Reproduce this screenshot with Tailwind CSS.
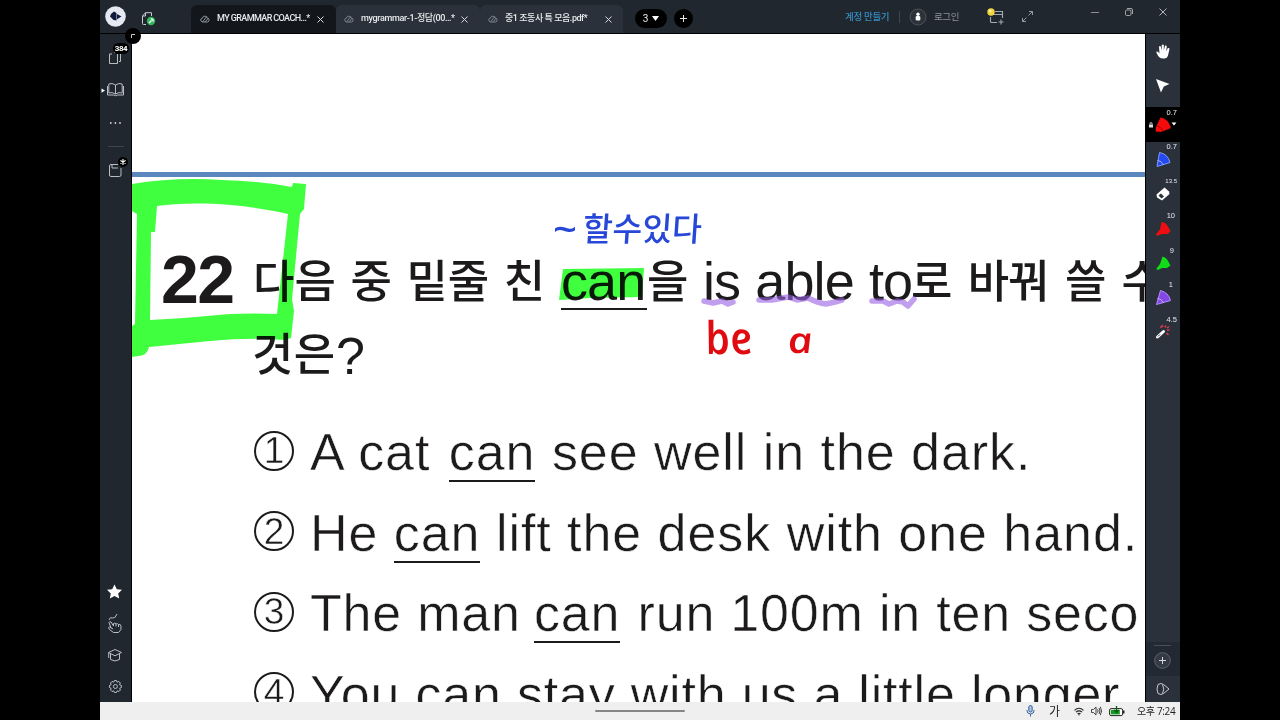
<!DOCTYPE html>
<html lang="ko">
<head>
<meta charset="utf-8">
<title>MY GRAMMAR COACH</title>
<script src="https://cdn.jsdelivr.net/npm/@tailwindcss/browser@4"></script>
</head>
<body class="bg-black w-[1280px] h-[720px] overflow-hidden font-['Liberation_Sans','Noto_Sans_CJK_KR',sans-serif]">
<div class="mx-[100px] h-[720px] flex flex-col bg-[#20272f]">

  <!-- title bar -->
  <header class="h-[34px] shrink-0 flex items-stretch bg-[#20272f] border-b border-black text-[#e8eaec] font-['Roboto','Noto_Sans_CJK_KR',sans-serif]">
    <div class="w-[91px] flex items-center pl-[5px] gap-[15px]">
      <svg class="w-[21px] h-[21px]" viewBox="0 0 21 21"><circle cx="10.5" cy="10.5" r="10.3" fill="#e6e8f2"/><path d="M9 5.500L11.500 7V14.500L8.500 14L5 10.500L6 8Z" fill="#101a3c"/><path d="M12 8L16.500 10.500L12 13.300Z" fill="#101a3c"/></svg>
      <svg class="w-[15px] h-[15px] mt-1" viewBox="0 0 15 15" fill="none"><path d="M5 13.500H2.500Q1.500 13.500 1.500 12.500V5L4.500 1.700H10.500V5" stroke="#c5cad0" stroke-width="1"/><path d="M1.500 5H4.500V1.700" stroke="#c5cad0" stroke-width="1"/><circle cx="10" cy="10" r="4.200" fill="#33b85a"/><path d="M8 12L10.500 9.500M10 8Q12.500 8 12 10.500" stroke="#fff" stroke-width="1.400"/></svg>
    </div>
    <div class="w-[145px] mt-[5px] rounded-t-md bg-[#13171b] flex items-center pl-[9px]">
      <svg class="w-[10px] h-[8px]" viewBox="0 0 10 8" fill="none" stroke="#8c9199"><path d="M2.500 7H7.500Q9.500 6.500 9 4.500Q8.500 2.500 7 3Q6 .5 3.800 1.200Q2.500 1.800 2.700 3Q.6 3.500 .7 5Q.8 6.500 2.500 7L7 1.200M5 7L8.500 3"/></svg>
      <span class="ml-[7px] w-[94px] text-[9px] tracking-[-0.6px] font-medium whitespace-nowrap">MY GRAMMAR COACH…*</span>
      <svg class="ml-[6px] w-[7px] h-[7px]" viewBox="0 0 7 7" stroke="#d9dce0"><path d="M.5 .5L6.500 6.500M6.500 .5L.5 6.500"/></svg>
    </div>
    <div class="w-[144px] mt-[5px] rounded-t-md bg-[#2a313b] flex items-center pl-[8px]">
      <svg class="w-[10px] h-[8px]" viewBox="0 0 10 8" fill="none" stroke="#7c828b"><path d="M2.500 7H7.500Q9.500 6.500 9 4.500Q8.500 2.500 7 3Q6 .5 3.800 1.200Q2.500 1.800 2.700 3Q.6 3.500 .7 5Q.8 6.500 2.500 7L7 1.200M5 7L8.500 3"/></svg>
      <span class="ml-[7px] w-[94px] text-[9px] tracking-[-0.35px] font-medium whitespace-nowrap">mygrammar-1-정답(00…*</span>
      <svg class="ml-[6px] w-[7px] h-[7px]" viewBox="0 0 7 7" stroke="#d9dce0"><path d="M.5 .5L6.500 6.500M6.500 .5L.5 6.500"/></svg>
    </div>
    <div class="w-[143px] mt-[5px] rounded-t-md bg-[#2a313b] flex items-center pl-[8px]">
      <svg class="w-[10px] h-[8px]" viewBox="0 0 10 8" fill="none" stroke="#7c828b"><path d="M2.500 7H7.500Q9.500 6.500 9 4.500Q8.500 2.500 7 3Q6 .5 3.800 1.200Q2.500 1.800 2.700 3Q.6 3.500 .7 5Q.8 6.500 2.500 7L7 1.200M5 7L8.500 3"/></svg>
      <span class="ml-[7px] w-[94px] text-[9px] tracking-[-0.45px] font-medium whitespace-nowrap">중1 조동사 특 모음.pdf*</span>
      <svg class="ml-[6px] w-[7px] h-[7px]" viewBox="0 0 7 7" stroke="#d9dce0"><path d="M.5 .5L6.500 6.500M6.500 .5L.5 6.500"/></svg>
    </div>
    <div class="ml-[12px] flex items-center gap-[7px] pt-[3px]">
      <div class="w-8 h-[19px] rounded-full bg-black flex items-center justify-center gap-1 text-[10px]"><span>3</span><svg class="w-[7px] h-[5px]" viewBox="0 0 7 5"><path d="M0 0H7L3.500 5Z" fill="#fff"/></svg></div>
      <div class="w-[19px] h-[19px] rounded-full bg-black flex items-center justify-center"><svg class="w-[7px] h-[7px]" viewBox="0 0 7 7" stroke="#e5e7ea"><path d="M3.500 0V7M0 3.500H7"/></svg></div>
    </div>
    <div class="ml-[152px] flex items-center whitespace-nowrap text-[9.5px]">
      <span class="w-[46px] pt-[2px] text-[#3590c4] tracking-[-0.3px] font-medium">계정 만들기</span>
      <span class="ml-[8px] w-px h-3 bg-[#3e454e]"></span>
      <svg class="ml-[9px] w-[18px] h-[18px]" viewBox="0 0 18 18"><circle cx="9" cy="9" r="8" fill="#2b323a" stroke="#4a5159"/><circle cx="9" cy="6.200" r="1.700" fill="#fff"/><rect x="6.700" y="8" width="4.600" height="4.600" rx="1.300" fill="#fff"/></svg>
      <span class="ml-[7px] w-[26px] pt-[2px] tracking-[-0.4px] text-[#8d9299]">로그인</span>
      <svg class="ml-[27px] w-[18px] h-[17px]" viewBox="0 0 18 17" fill="none" stroke="#a4a9b0" stroke-width="1.100"><path d="M8 3.500H15.500V10M3.500 9V13.500Q3.500 14.500 4.500 14.500H10M4 6.500H15.500M14 11.500V16.500M11.500 14H16.500"/><circle cx="4" cy="4" r="3.700" fill="#f4d43c" stroke="none"/><circle cx="3.200" cy="3" r="1.300" fill="#fff6b0" stroke="none"/></svg>
      <svg class="ml-[17px] w-[11px] h-[11px]" viewBox="0 0 11 11" fill="none" stroke="#959aa1"><path d="M7 .5H10.500V4M10.500 .5L6.500 4.500M4 10.500H.5V7M.5 10.500L4.500 6.500"/></svg>
    </div>
    <div class="ml-auto mr-[13px] h-6 flex items-center gap-[26px]">
      <svg class="w-2 h-2" viewBox="0 0 8 8" stroke="#8b9097"><path d="M0 4.500H8"/></svg>
      <svg class="w-2 h-2" viewBox="0 0 8 8" fill="none" stroke="#a1a5ab"><rect x=".5" y="2" width="5.500" height="5.500" rx="1.200"/><path d="M2 .5H6Q7.500 .5 7.500 2V6"/></svg>
      <svg class="w-2 h-2" viewBox="0 0 8 8" stroke="#b1b5bb"><path d="M.5 .5L7.500 7.500M7.500 .5L.5 7.500"/></svg>
    </div>
  </header>

  <div class="h-[668px] flex">
    <!-- left tools -->
    <aside class="relative w-[32px] shrink-0 bg-[#20272f] border-r border-black">
      <svg class="w-8 h-[668px]" viewBox="100 34 32 668" fill="none" stroke="#b9bec5" stroke-width="1">
        <path d="M112 54H109.500V63.500H117.500V54M114 52.500H119Q121 52.500 120.500 54V61.500H119"/>
        <path d="M115.500 85Q112 82.500 108.800 84V93Q112 91.800 115.500 94Q119 91.800 122.200 93V84Q119 82.500 115.500 85V94M107.500 86V95H113.500Q115.500 96.500 117.500 95H123.500V86"/>
        <path d="M101.500 88.500L105 90.500L101.500 92.700Z" fill="#fff" stroke="none"/>
        <g fill="#cfd3d8" stroke="none"><circle cx="110.800" cy="123" r=".9"/><circle cx="115.400" cy="123" r=".9"/><circle cx="120" cy="123" r=".9"/></g>
        <path d="M108 146.500H124" stroke="#3d444c"/>
        <path d="M118 164.500H111Q109.500 164.500 109.500 166V175Q109.500 176.500 111 176.500H119.500Q121 176.500 121 175V168M112 164.500V168H118"/>
        <path d="M114.500 584.500L116.800 589.200L122 589.800L118.200 593.400L119.200 598.500L114.500 596L109.800 598.500L110.800 593.400L107 589.800L112.200 589.200Z" fill="#fff" stroke="none"/>
        <path d="M109 620Q110 616.500 112.500 618Q115 619 117 614M111 628L109 622.500Q109.500 621 111 622L113.500 626V623.500Q115 622.500 116 624Q117.500 623 118.500 624.500Q120.500 623.500 121 626Q122 630 118.500 632.500Q113 634 109.500 629.500Q107.500 627 109.500 627L113 629M116 624V626.500M118.500 624.500V627"/>
        <path d="M108.500 652.500L115 649.500L121.500 652.500L115 655.800ZM110.500 654V659.500Q115 662.500 119.500 659.500V654M108.700 653V658"/>
        <circle cx="115.400" cy="686.500" r="2"/>
        <path d="M114.400 680.500H116.400L117 682.200L118.800 681.400L120.300 683L119.500 684.700L121.400 685.500V687.500L119.600 688.300L120.400 690L119 691.500L117.200 690.800L116.400 692.500H114.400L113.700 690.800L112 691.500L110.500 690L111.200 688.300L109.400 687.500V685.500L111.200 684.700L110.500 683L112 681.400L113.700 682.200Z"/>
      </svg>
      <span class="absolute left-[13px] top-[9px] w-4 h-[11px] rounded-full bg-black text-white text-[8px] leading-[11px] text-center font-bold tracking-[-0.4px] font-['Roboto']">384</span>
      <span class="absolute left-[18px] top-[123px] w-[10px] h-[10px] rounded-full bg-black flex items-center justify-center"><svg class="w-[6px] h-[6px]" viewBox="0 0 6 6" stroke="#fff" stroke-width="1.100"><path d="M3 0V6M.4 1.500L5.600 4.500M5.600 1.500L.4 4.500"/></svg></span>
      <span class="absolute z-10 left-[25px] top-[-6px] w-[16px] h-[16px] rounded-full bg-black flex items-center justify-center"><svg class="w-1 h-1" viewBox="0 0 4 4" fill="none" stroke="#c5c8cc"><path d="M.5 4V.5H4"/></svg></span>
    </aside>

    <!-- PDF page -->
    <main class="relative w-[1013px] shrink-0 h-[668px] overflow-hidden bg-white text-[#1c1a1b] whitespace-nowrap">
      <div class="h-[138px]"></div>
      <div class="h-[5px] bg-[#5b87bf]"></div>
      <div class="pt-[60px] h-[141px]">
        <div class="h-[88px] flex items-center leading-none text-[54px] tracking-[-0.9px]">
          <span class="shrink-0 ml-[29px] w-[92px] text-[68px] font-bold tracking-[-1.5px] mt-[-4px]">22</span>
          <span class="shrink-0 w-[308px] text-[45px] mt-[-6px] tracking-normal [word-spacing:2px] font-medium font-['Noto_Sans_CJK_KR']">다음 중 밑줄 친</span>
          <span class="shrink-0 w-[86px] h-[56px] border-b-2 border-[#1c1a1b] mt-[2px]">can</span>
          <span class="shrink-0 w-[56px] text-[45px] mt-[-6px] font-medium font-['Noto_Sans_CJK_KR']">을</span>
          <span class="shrink-0 w-[208px] [word-spacing:1px]">is able to</span>
          <span class="shrink-0 text-[45px] mt-[-6px] [word-spacing:4.5px] font-medium font-['Noto_Sans_CJK_KR']">로 바꿔 쓸 수</span>
        </div>
      </div>
      <div class="h-[94px] pl-[120px] flex leading-none text-[45px] font-medium font-['Noto_Sans_CJK_KR']">
        <span class="w-[84px] pt-[11px] tracking-[0.4px]">것은</span><span class="pt-[12px] text-[52px] font-normal font-['Liberation_Sans']">?</span>
      </div>
      <div class="text-[52px] leading-none [-webkit-text-stroke:0.5px_white]">
        <div class="h-[80.5px] flex items-center pl-[122px]"><span class="shrink-0 w-10 h-10 mt-[-3px] rounded-full border-2 border-[#1c1a1b] text-[37px] flex items-center justify-center">1</span><span class="ml-4 tracking-[0.95px]">A cat <span class="inline-block pb-[2px] mb-[-4px] ml-[3px] mr-px border-b-2 border-[#1c1a1b]">can</span> see well in the dark.</span></div>
        <div class="h-[80.5px] flex items-center pl-[122px]"><span class="shrink-0 w-10 h-10 mt-[-3px] rounded-full border-2 border-[#1c1a1b] text-[37px] flex items-center justify-center">2</span><span class="ml-4 tracking-[0.95px]">He <span class="inline-block pb-[2px] mb-[-4px] border-b-2 border-[#1c1a1b]">can</span> lift the desk with one hand.</span></div>
        <div class="h-[80.5px] flex items-center pl-[122px]"><span class="shrink-0 w-10 h-10 mt-[-3px] rounded-full border-2 border-[#1c1a1b] text-[37px] flex items-center justify-center">3</span><span class="ml-4 tracking-[0.8px]">The man <span class="inline-block pb-[2px] mb-[-4px] ml-[-2px] mr-[2px] border-b-2 border-[#1c1a1b]">can</span> run 100m in ten seco</span></div>
        <div class="h-[80.5px] flex items-center pl-[122px]"><span class="shrink-0 w-10 h-10 mt-[-3px] rounded-full border-2 border-[#1c1a1b] text-[37px] flex items-center justify-center">4</span><span class="ml-4 tracking-[0.8px]">You <span class="inline-block pb-[2px] mb-[-4px] border-b-2 border-[#1c1a1b]">can</span> stay with us a little longer</span></div>
      </div>

      <!-- highlighter ink -->
      <svg class="absolute inset-0 w-[1014px] h-[668px] mix-blend-multiply" viewBox="132 34 1014 668">
        <path fill="#3fff3f" fill-rule="evenodd" d="M132 184Q175 177 222 180Q260 181 292 187L293 183L306 184L304 209L300 214L292 299L294 311L291 338L284 340Q250 337 210 341L149 347Q147 356 138 356L132 357V326L135 324L137 214L132 211ZM157 206L155 232L151 232L150 320Q190 318 230 314Q255 313 277 314L288 214Q250 205 205 203.500Q175 203 157 206Z"/>
        <path fill="#3fff3f" d="M563 269L644 268L642 297L590 298L559 300Z"/>
      </svg>
      <!-- pen ink -->
      <svg class="absolute inset-0 w-[1014px] h-[668px]" viewBox="132 34 1014 668">
        <g fill="none" stroke="#9b63e3" stroke-opacity=".62" stroke-width="5.500" stroke-linecap="round" stroke-linejoin="round">
          <path d="M704 301L713 303L722 301L728 304L733 302"/>
          <path d="M759 300L772 300L788 297L797 300L808 298Q818 303 826 304L835 302L842 300"/>
          <path d="M872 301L883 301L889 304L897 301L903 302L908 306L914 299"/>
        </g>
        <text x="553" y="243" textLength="24" lengthAdjust="spacingAndGlyphs" font-family="Open Sans" font-weight="600" font-size="38" fill="#2747d8">~</text>
        <text transform="translate(582 241) skewX(-4)" textLength="119" lengthAdjust="spacingAndGlyphs" font-family="Noto Sans CJK KR" font-weight="500" font-size="33" fill="#2747d8">할수있다</text>
        <text transform="translate(708 354) skewX(12)" textLength="47" lengthAdjust="spacingAndGlyphs" font-family="Open Sans" font-style="italic" font-weight="600" font-size="45" fill="#e00a10">be</text>
        <text transform="translate(789 353) skewX(8)" textLength="25" lengthAdjust="spacingAndGlyphs" font-family="Open Sans" font-style="italic" font-weight="600" font-size="36" fill="#e00a10">a</text>
      </svg>
    </main>

    <!-- pen palette -->
    <aside class="relative w-[35px] shrink-0 bg-[#2a313b] border-l border-black">
      <div class="absolute top-[73px] left-0 w-full h-[35px] bg-black"></div>
      <svg class="absolute inset-0 w-[34px] h-[668px]" viewBox="1146 34 34 668" fill="none">
        <rect x="1146" y="642" width="34" height="34" fill="#222932"/>
        <path d="M1159 57Q1156 53 1156.500 51.500Q1158 51 1159.500 53.500L1159 46.500Q1160 45.500 1160.800 46.500L1161.500 50.500L1161.800 45Q1163 44 1163.800 45V50.500L1165 45.500Q1166.500 45 1166.800 46.500L1166.200 51.500L1167.800 48Q1169.500 47.500 1169.500 49L1168 55.500Q1167 59 1163.500 58.500Q1160.500 58.500 1159 57Z" fill="#fff"/>
        <path d="M1156 79L1169.500 84L1163.800 86.500L1161 92.500Z" fill="#fff"/>
        <path d="M1160.500 117.500Q1168 118.500 1171 128L1161 132L1155.500 131.500L1156 127Z" fill="#f50b0b"/><path d="M1157 126Q1161 126 1163 131" stroke="#a30000"/>
        <rect x="1149" y="124.500" width="4" height="3" fill="#ddd"/><path d="M1150 124.500V122.800H1152V124.500" stroke="#ddd" stroke-width=".8"/>
        <path d="M1171.500 122.500H1176.500L1174 125.500Z" fill="#fff"/>
        <path d="M1159.500 152.500Q1168 154 1170 162.500L1157 166.500Z" fill="#2449ee" stroke="#7f98ff"/><path d="M1157.500 160.500Q1161.500 160.500 1163.500 165" stroke="#9fb2ff"/>
        <path d="M1156.500 194.500L1164.500 187.500L1169 191.500L1169.500 194L1162 200.500L1157 197.500Z" fill="#fff"/><path d="M1158.500 195.500L1161 193.500L1164 196.500L1161.500 198.500Z" fill="#2a313b"/>
        <path d="M1161.500 222Q1166 222.500 1167.500 226L1170.500 231L1168 234H1162L1159.500 235Q1156 236.500 1156 234L1160 229.500Z" fill="#ee0e12"/>
        <path d="M1162.500 256.500Q1166.500 257.500 1168 261L1170.500 265.500L1167 268H1162L1159 269.500Q1156 270.500 1156.500 268.500L1160 264Z" fill="#10dc18"/>
        <path d="M1160.500 290.500Q1168.500 292.500 1170.500 300.500L1156.500 304.500Z" fill="#8347e6" stroke="#b58cff"/><path d="M1157.500 298.500Q1161.500 298.500 1163.500 303" stroke="#c6a8ff"/>
        <path d="M1157.500 337L1163.500 331.500" stroke="#fff" stroke-width="3" stroke-linecap="round"/><path d="M1158 336.500L1160 334.500" stroke="#2a313b"/>
        <path d="M1161 328V326M1165 327.500L1166 325.500M1167 330H1169.500M1166.500 333L1168.500 335M1163 327L1162 325M1167 328L1169 326.500" stroke="#e23b4f" stroke-width="1.400"/>
        <path d="M1154 645.500H1171" stroke="#474e57"/>
        <circle cx="1162.500" cy="660.500" r="7.800" fill="#333a43" stroke="#5d646d"/><path d="M1162.500 657V664M1159 660.500H1166" stroke="#d6d9dd"/>
        <path d="M1158 684.500Q1161 682.500 1163.500 684.500L1169 689L1163.500 693.500Q1161 695.500 1158 693.500L1157 689ZM1162.500 684.500Q1165 689 1162.500 693.500" stroke="#c6cad0"/>
      </svg>
      <div class="relative flex flex-col items-end pr-[3px] text-[#e9ebee] text-[7.5px] leading-[10px] font-['Liberation_Sans']">
        <span class="mt-[74px] h-[34px]">0.7</span>
        <span class="h-[34px]">0.7</span>
        <span class="h-[35px] text-[6px]">13.5</span>
        <span class="pr-[2px] h-[35px]">10</span>
        <span class="pr-[3px] h-[34px]">9</span>
        <span class="pr-[4px] h-[35px]">1</span>
        <span>4.5</span>
      </div>
    </aside>
  </div>

  <!-- taskbar -->
  <footer class="relative h-[18px] bg-[#efefef] flex items-center justify-end text-[#222] pr-[5px] text-[10px]">
    <div class="absolute left-[495px] top-[8px] w-[90px] h-[2px] rounded-full bg-[#858585]"></div>
    <svg class="w-[9px] h-[12px]" viewBox="0 0 9 12" fill="none" stroke="#35619c"><rect x="2.800" y=".5" width="3.400" height="6.500" rx="1.700" fill="#a8c4e6"/><path d="M.8 5Q1 9 4.500 9Q8 9 8.200 5M4.500 9V11.500"/></svg>
    <span class="ml-[14px] w-[12px] text-[12px] leading-none font-['Noto_Sans_CJK_KR']">가</span>
    <svg class="ml-[13px] w-[10px] h-[9px]" viewBox="0 0 10 9" fill="none" stroke="#222" stroke-width="1.100"><path d="M.5 3.300Q5 -.8 9.500 3.300M2 5.200Q5 2.600 8 5.200M3.500 6.800Q5 5.600 6.500 6.800"/><circle cx="5" cy="7.800" r=".7" fill="#222" stroke="none"/></svg>
    <svg class="ml-[7px] w-[11px] h-[10px]" viewBox="0 0 11 10" fill="none" stroke="#333"><path d="M.5 3.500H2.500L5 1V9L2.500 6.500H.5ZM6.500 3.300Q7.700 5 6.500 6.700M8 2Q10 5 8 8M9.300 .8Q11.800 5 9.300 9.200" stroke-width=".9"/></svg>
    <svg class="ml-[7px] w-[16px] h-[11px]" viewBox="0 0 16 11"><rect x=".6" y="2.600" width="13" height="7" rx="1.500" fill="#fff" stroke="#222"/><rect x="1.800" y="3.800" width="9" height="4.600" fill="#169b22"/><rect x="14" y="4.500" width="1.500" height="3" fill="#222"/><path d="M7.500 0V6M5.300 4L7.500 6.500L9.700 4" stroke="#0b5c12" stroke-width="1.300" fill="none"/></svg>
    <span class="ml-[12px] w-[38px] tracking-[-0.35px] leading-none whitespace-nowrap font-['Open_Sans','Noto_Sans_CJK_KR']">오후 7:24</span>
  </footer>
</div>
</body>
</html>
